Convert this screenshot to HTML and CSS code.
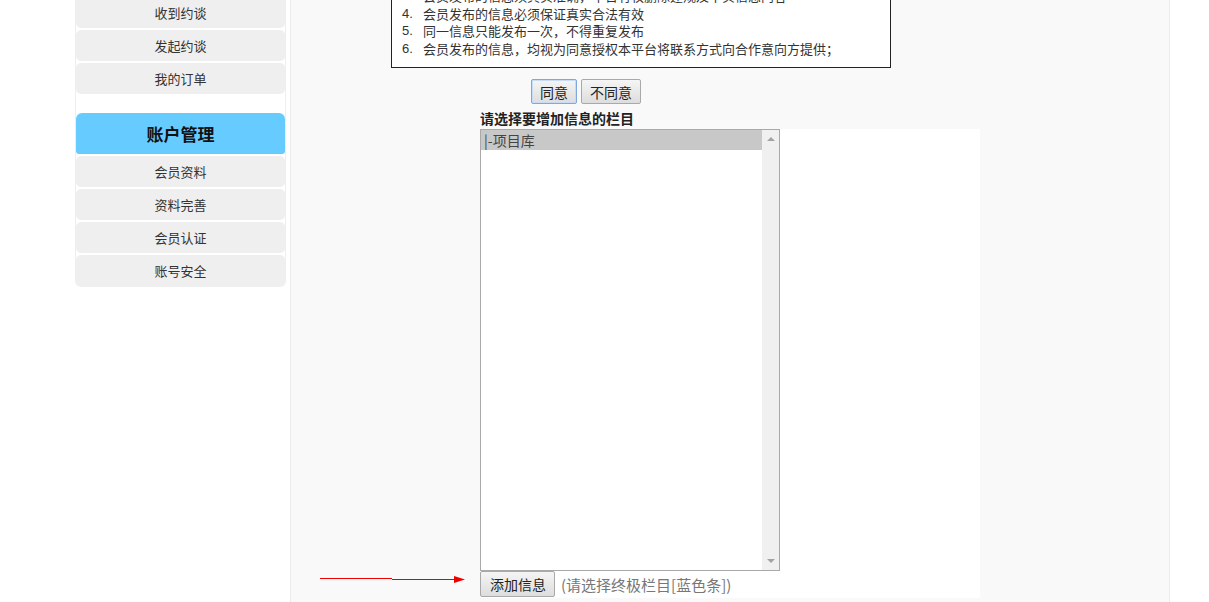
FILE: index.html
```html
<!DOCTYPE html>
<html lang="zh-CN">
<head>
    <meta charset="UTF-8">
    <title>发布信息</title>
    <link rel="stylesheet" href="styles.css">
</head>
<body>
    <div class="page">
        <div class="sidebar">
            <div class="menu-item">收到约谈</div>
            <div class="menu-item">发起约谈</div>
            <div class="menu-item">我的订单</div>
            <div class="menu-title">账户管理</div>
            <div class="menu-item">会员资料</div>
            <div class="menu-item">资料完善</div>
            <div class="menu-item">会员认证</div>
            <div class="menu-item">账号安全</div>
        </div>
        <div class="main">
            <div class="notice">
                <div class="line"><span class="num">3.</span>会员发布的信息须真实准确，平台有权删除违规及不实信息内容</div>
                <div class="line"><span class="num">4.</span>会员发布的信息必须保证真实合法有效</div>
                <div class="line"><span class="num">5.</span>同一信息只能发布一次，不得重复发布</div>
                <div class="line"><span class="num">6.</span>会员发布的信息，均视为同意授权本平台将联系方式向合作意向方提供；</div>
            </div>
            <div class="agree">
                <button class="btn focused">同意</button>
                <button class="btn">不同意</button>
            </div>
            <div class="form">
                <div class="form-title">请选择要增加信息的栏目</div>
                <div class="form-box">
                    <div class="listbox">
                        <div class="options">
                            <div class="option selected">|-项目库</div>
                        </div>
                        <div class="scroll">
                            <span class="arrow up"></span>
                            <span class="arrow down"></span>
                        </div>
                    </div>
                    <div class="actions">
                        <button class="btn">添加信息</button>
                        <span class="hint">(请选择终极栏目[蓝色条])</span>
                    </div>
                </div>
            </div>
            <svg class="pointer" width="150" height="12" viewBox="0 0 150 12">
                <line x1="0" y1="5.5" x2="72" y2="5.5" stroke="#e00" stroke-width="1"/>
                <line x1="72" y1="6.5" x2="136" y2="6.5" stroke="#e00" stroke-width="1"/>
                <polygon points="134,3 145,6.5 134,10" fill="#e00"/>
            </svg>
        </div>
    </div>
</body>
</html>
```

FILE: styles.css
```css
body {
    margin: 0;
    background: #fff;
    font-family: "Noto Sans CJK SC", "Noto Sans", sans-serif;
    color: #333;
    overflow: hidden;
}
.page {
    display: flex;
    align-items: flex-start;
    margin-left: 75px;
    width: 1095px;
}
.sidebar {
    width: 209px;
    margin-top: -3px;
    margin-right: 4px;
    border: 1px solid #eee;
    border-top: none;
    border-radius: 0 0 6px 6px;
    display: flex;
    flex-direction: column;
    gap: 2px;
}
.menu-item {
    height: 31px;
    line-height: 31px;
    text-align: center;
    font-size: 13px;
    color: #333;
    background: #efefef;
    border-radius: 5px;
}
.menu-title {
    height: 41px;
    line-height: 41px;
    margin-top: 17px;
    text-align: center;
    font-size: 17px;
    font-weight: bold;
    color: #111;
    background: #66ccff;
    border-radius: 6px 6px 3px 3px;
}
.main {
    position: relative;
    flex: 1;
    min-height: 700px;
    background: #f9f9f9;
    border-left: 1px solid #ebebeb;
    border-right: 1px solid #ebebeb;
}
.notice {
    width: 486px;
    margin: -20px 0 0 100px;
    padding: 6px 2px 10px 10px;
    border: 1px solid #222;
    background: #fff;
    font-size: 13px;
}
.line {
    display: flex;
    height: 17.5px;
    line-height: 17.5px;
    white-space: nowrap;
}
.num {
    width: 21px;
    flex: none;
    font-family: "Liberation Sans", sans-serif;
}
.agree {
    margin: 11px 0 3px 240px;
    display: flex;
    gap: 4px;
}
.btn {
    height: 25px;
    padding: 0 8px;
    font-family: "Noto Sans CJK SC", sans-serif;
    font-size: 14px;
    color: #222;
    background: linear-gradient(#f5f5f5, #dddddd);
    border: 1px solid #a9a9a9;
    border-radius: 2px;
}
.btn.focused {
    border-color: #7ea8df;
    box-shadow: inset 0 0 0 1px #c9dcf5;
}
.form {
    width: 500px;
    margin: 0 auto;
}
.form-title {
    line-height: 22px;
    font-size: 14px;
    font-weight: bold;
    color: #222;
}
.form-box {
    background: #fff;
    padding-bottom: 1px;
}
.listbox {
    width: 298px;
    height: 440px;
    border: 1px solid #a9a9a9;
    display: flex;
}
.options {
    flex: 1;
}
.option {
    height: 20px;
    line-height: 20px;
    padding-left: 3px;
    font-size: 14px;
    color: #444;
}
.option.selected {
    background: #c8c8c8;
}
.scroll {
    width: 17px;
    background: #f0f0f0;
    display: flex;
    flex-direction: column;
    justify-content: space-between;
    align-items: center;
    padding: 7px 0;
}
.arrow {
    width: 0;
    height: 0;
    border-left: 4px solid transparent;
    border-right: 4px solid transparent;
}
.arrow.up {
    border-bottom: 4px solid #a3a3a3;
}
.arrow.down {
    border-top: 4px solid #a3a3a3;
}
.actions {
    display: flex;
    align-items: center;
    gap: 6px;
}
.actions .btn {
    height: 26px;
    padding: 0 8px 0 9px;
}
.hint {
    font-size: 15px;
    color: #777;
}
.pointer {
    position: absolute;
    left: 29px;
    top: 573px;
}
```
